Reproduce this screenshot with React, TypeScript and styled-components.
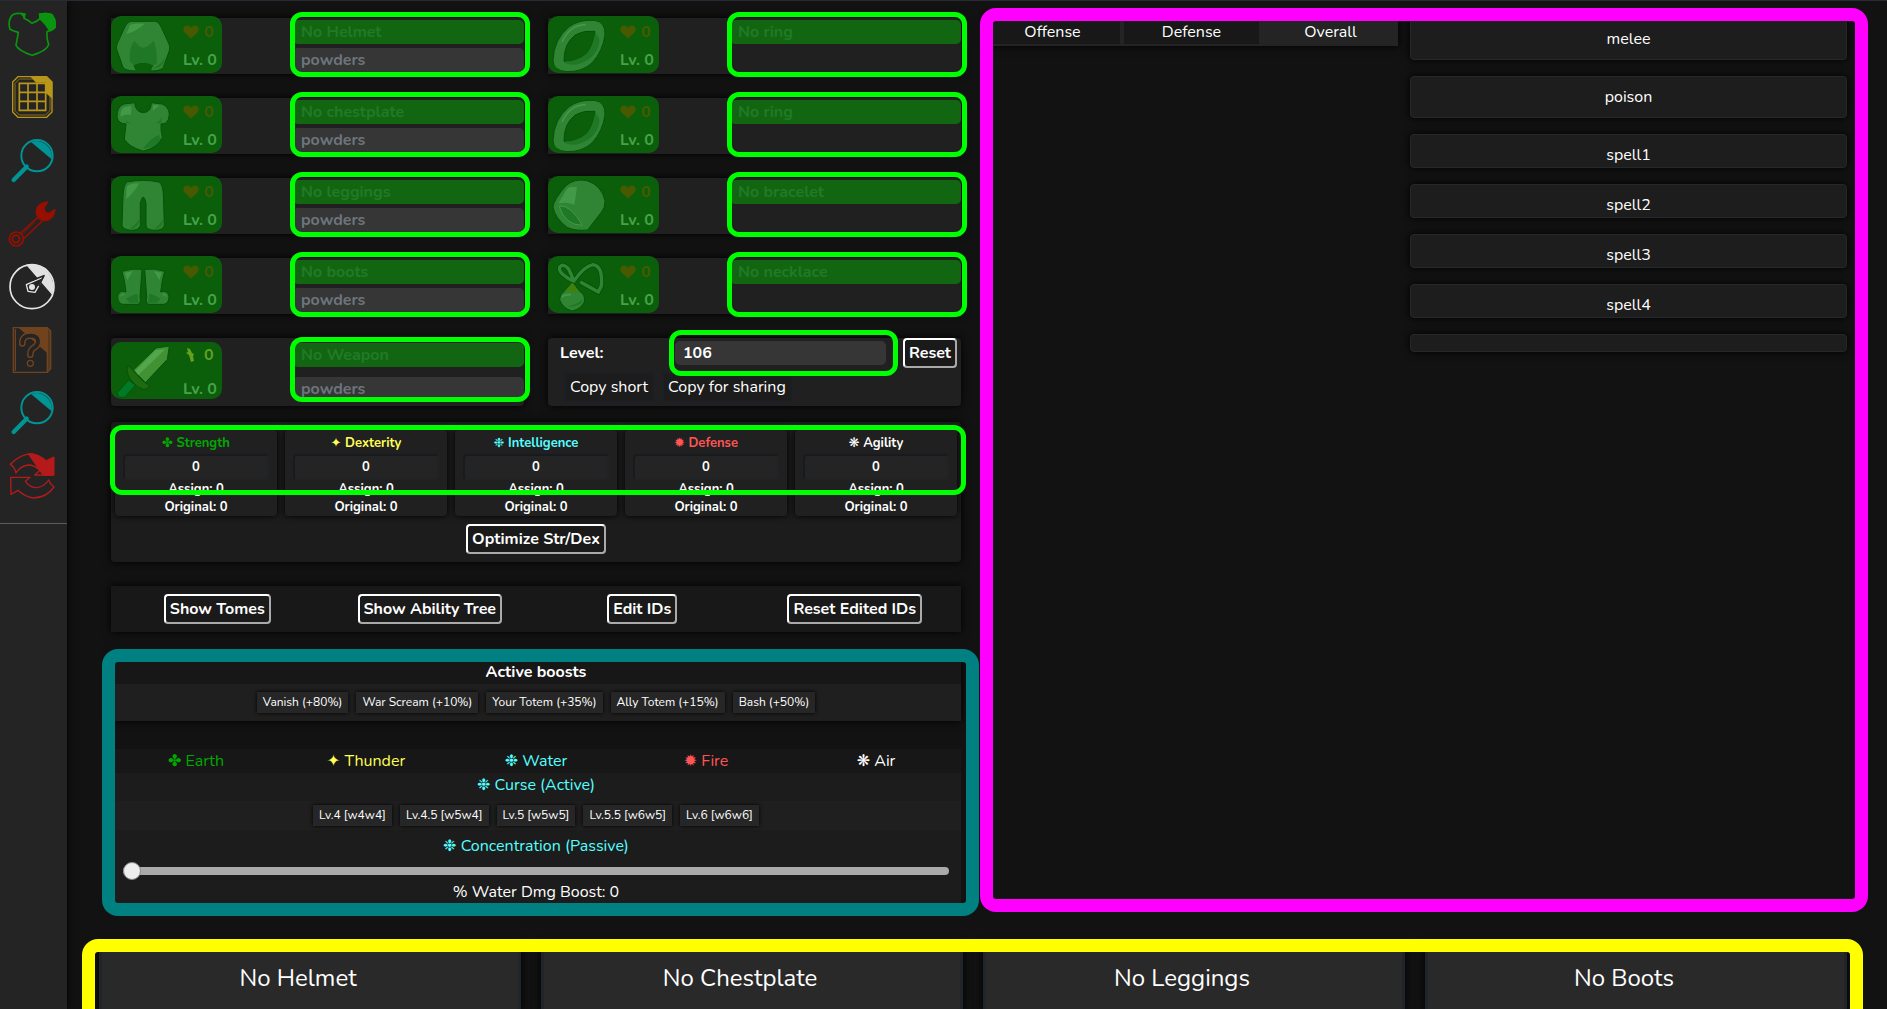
import React, { useState } from "react";
import styled, { createGlobalStyle } from "styled-components";

const GlobalStyle = createGlobalStyle`
  *, *::before, *::after { box-sizing: border-box; }
  body {
    margin: 0;
    background: #121212;
    color: #fff;
    font: 16px/24px Nunito, Lato, "DejaVu Sans", sans-serif;
  }
  button, input { font: inherit; color: inherit; margin: 0; }
  h2, p { margin: 0; font: inherit; }
`;

/* ---------- page frame ---------- */

const Shell = styled.div`
  display: flex;
  height: 100vh;
  overflow: hidden;
  border-top: 1px solid #2a2a35;
`;

const Sidebar = styled.nav`
  flex: 0 0 67px;
  display: flex;
  flex-direction: column;
  align-items: flex-start;
  gap: 15px;
  padding: 9px 8px;
  background: #242424;
  box-shadow: 0 0 8px #000;
`;

const SideLink = styled.a`
  display: block;
  width: 48px;
  height: 48px;
  svg { display: block; width: 48px; height: 48px; }
`;

const Divider = styled.hr`
  align-self: stretch;
  margin: 9px -8px 0;
  border: 0;
  border-top: 1px solid #5c5c5c;
`;

const Main = styled.main`
  flex: 1;
  min-width: 0;
  display: flex;
  flex-direction: column;
  padding: 17px 40px 0 32px;
`;

const Builder = styled.div`
  display: grid;
  grid-template-columns: minmax(0, 850fr) minmax(0, 862fr);
  gap: 24px;
  padding-left: 12px;
`;

/* Coloured outline laid over a group of controls. */
const Outline = styled.span<{ $color: string; $inset: string; $thick?: boolean }>`
  position: absolute;
  inset: ${(p) => p.$inset};
  border: ${(p) => (p.$thick ? 13 : 5)}px solid ${(p) => p.$color};
  border-radius: ${(p) => (p.$thick ? 16 : 12)}px;
  pointer-events: none;
`;

/* ---------- equipment ---------- */

const GearGrid = styled.section`
  display: grid;
  grid-template-columns: repeat(2, minmax(0, 1fr));
  gap: 24px;
  margin-bottom: 16px;
`;

const GearCard = styled.div<{ $tall?: boolean }>`
  display: flex;
  justify-content: space-between;
  align-items: flex-start;
  height: ${(p) => (p.$tall ? 68 : 56)}px;
  background: #202020;
  border-radius: ${(p) => (p.$tall ? 4 : 0)}px;
  box-shadow: 0 0 8px #000;
`;

const Tile = styled.div<{ $tall?: boolean }>`
  display: flex;
  width: 111px;
  height: 57px;
  margin-top: ${(p) => (p.$tall ? 4 : -2)}px;
  background: #0b5f0b;
  border-radius: 10px;
`;

const TileArt = styled.svg`
  width: 60px;
  height: 57px;
`;

const TileStats = styled.div<{ $tall?: boolean }>`
  display: flex;
  flex-direction: column;
  gap: ${(p) => (p.$tall ? 10 : 4)}px;
  padding: ${(p) => (p.$tall ? 1 : 4)}px 0 0 12px;
  font-weight: 700;
  color: #48a348;
`;

const Stat = styled.span<{ $color?: string }>`
  display: flex;
  align-items: center;
  gap: 5px;
  white-space: nowrap;
  color: ${(p) => p.$color ?? "inherit"};
`;

const Fields = styled.div<{ $tall?: boolean }>`
  position: relative;
  display: flex;
  flex-direction: column;
  gap: ${(p) => (p.$tall ? 10 : 4)}px;
  width: 231px;
  height: 100%;
  padding-top: ${(p) => (p.$tall ? 5 : 2)}px;
`;

const TextBox = styled.input<{ $named?: boolean }>`
  width: 100%;
  height: 24px;
  padding: 0 8px;
  border: 0;
  border-radius: 5px;
  background: ${(p) => (p.$named ? "#126612" : "#363636")};
  font-weight: 700;
  &::placeholder {
    opacity: 1;
    color: ${(p) => (p.$named ? "#217a26" : "#6c757d")};
  }
`;

/* ---------- level card ---------- */

const LevelCard = styled.div`
  height: 68px;
  padding: 0 4px 4px 12px;
  background: #202020;
  border-radius: 4px;
  box-shadow: 0 0 8px #000;
`;

const LevelRow = styled.div`
  display: flex;
  align-items: center;
  height: 30px;
  label { width: 115px; font-weight: 700; }
`;

const LevelField = styled.div`
  position: relative;
  display: flex;
  flex: 1;
  margin-right: 17px;
`;

const CopyRow = styled.div`
  display: flex;
  gap: 8px;
  margin: 4px;
`;

const CopyButton = styled.button`
  height: 30px;
  padding: 0 4px;
  border: 2px solid #1b1f23;
  border-radius: 3px;
  background: #1c1c1c;
`;

const OutsetButton = styled.button`
  height: 30px;
  padding: 0 4px;
  border: 2px solid;
  border-color: #fff #aaa #aaa #fff;
  border-radius: 4px;
  background: #1a1a1a;
  font-weight: 700;
  white-space: nowrap;
`;

/* ---------- skill points ---------- */

const SkillPanel = styled.section`
  position: relative;
  padding: 8px 4px;
  background: #1c1c1c;
  border-radius: 4px;
  box-shadow: 0 0 8px #000;
  text-align: center;
`;

const SkillGrid = styled.div`
  display: grid;
  grid-template-columns: repeat(5, minmax(0, 1fr));
  gap: 8px;
  margin-bottom: 8px;
`;

const SkillCard = styled.div`
  display: flex;
  flex-direction: column;
  padding: 4px 8px 0;
  background: #202020;
  border-radius: 4px;
  box-shadow: 0 0 6px #000;
  font-size: 13px;
  line-height: 18px;
  font-weight: 700;
`;

const SkillName = styled.label<{ $color: string }>`
  margin-bottom: 2px;
  color: ${(p) => p.$color};
`;

const SkillInput = styled.input`
  width: 100%;
  height: 26px;
  padding: 0;
  border: 2px solid;
  border-color: #171b1f #202326 #202326 #171b1f;
  border-radius: 4px;
  background: #242424;
  text-align: center;
`;

const ActionPanel = styled.section`
  display: grid;
  grid-template-columns: repeat(4, minmax(0, 1fr));
  justify-items: center;
  margin: 24px 0;
  padding: 8px 0;
  background: #181818;
  box-shadow: 0 0 8px #000;
`;

/* ---------- boosts ---------- */

const Boosts = styled.section`
  position: relative;
  text-align: center;
`;

const BoostCard = styled.div`
  margin-bottom: 28px;
  background: #1f1f1f;
  border-radius: 0 0 4px 4px;
  box-shadow: 0 0 8px #000;
`;

const BoostTitle = styled.h2`
  padding: 4px 0 0;
  background: #171717;
  font-weight: 700;
`;

const ToggleRow = styled.div<{ $pad: number }>`
  display: flex;
  justify-content: center;
  gap: 8px;
  padding: ${(p) => p.$pad}px 0;
  background: #1f1f1f;
`;

const Toggle = styled.button`
  height: 21px;
  padding: 0 6px;
  border: 0;
  background: #262626;
  box-shadow: 0 0 4px #000;
  font-size: 12px;
  line-height: 21px;
`;

const ElementTabs = styled.div`
  display: grid;
  grid-template-columns: repeat(5, minmax(0, 1fr));
  background: #171717;
`;

const ElementTab = styled.button<{ $color: string }>`
  height: 24px;
  padding: 0;
  border: 0;
  background: none;
  color: ${(p) => p.$color};
`;

const ElementBody = styled.div`
  background: #1c1c1c;
`;

const BoostLabel = styled.p`
  height: 28px;
  color: #5ff;
`;

const SliderLabel = styled.label`
  display: block;
  padding: 4px 0;
  color: #5ff;
`;

const Slider = styled.input`
  display: block;
  appearance: none;
  width: calc(100% - 24px);
  height: 18px;
  margin: 0 12px;
  background: none;
  &::-webkit-slider-runnable-track {
    height: 8px;
    border-radius: 4px;
    background: #aaa;
  }
  &::-webkit-slider-thumb {
    appearance: none;
    width: 18px;
    height: 18px;
    margin-top: -5px;
    border: 1px solid #888;
    border-radius: 50%;
    background: #eee;
  }
`;

/* ---------- results ---------- */

const Results = styled.section`
  position: relative;
  display: grid;
  grid-template-columns: minmax(0, 413fr) minmax(0, 437fr);
  gap: 12px;
  align-items: start;
`;

const ResultTabs = styled.div`
  display: grid;
  grid-template-columns: repeat(3, minmax(0, 1fr));
  gap: 4px;
  padding-bottom: 2px;
  background: #242424;
  box-shadow: 0 0 8px #000;
`;

const ResultTab = styled.button<{ $active: boolean }>`
  height: 26px;
  padding: 2px 0 0;
  border: 0;
  background: ${(p) => (p.$active ? "#242424" : "#181818")};
`;

const SpellList = styled.div`
  display: flex;
  flex-direction: column;
  gap: 16px;
`;

const SpellCard = styled.div<{ $padBottom: number }>`
  padding: 8px 8px ${(p) => p.$padBottom}px;
  border: 1px solid #24272b;
  border-radius: 4px;
  background: #1d1d1d;
  box-shadow: 0 0 8px #000;
  text-align: center;
`;

/* ---------- item summary ---------- */

const Summary = styled.section`
  position: relative;
  flex: 1;
  display: grid;
  grid-template-columns: repeat(4, minmax(0, 1fr));
  gap: 20px;
  margin-top: 40px;
`;

const SummaryCard = styled.article`
  padding: 15px 24px 15px 0;
  border: 3px solid #212529;
  border-radius: 4px;
  background: #292929;
  box-shadow: 0 0 10px #000;
  font-size: 24px;
  line-height: 32px;
  text-align: center;
`;

/* ---------- sidebar drawings ---------- */

const ShirtIcon = () => (
  <svg viewBox="24 30 144 144" fill="none" stroke="#0a940f" strokeWidth="5" strokeLinejoin="round">
    <path d="M66 41 L74 42 L72 55 Q84 60 96 70 Q112 64 120 56 L119 42 Q140 38 156 44 Q168 60 165 82 Q158 92 142 94 Q138 108 146 134 Q140 152 96 166 Q56 152 48 136 L55 97 Q40 94 30 88 Q22 62 38 44 Q52 38 66 41 Z" />
    <path fill="#0a940f" d="M119 42 Q140 38 156 44 Q168 60 165 82 L150 92 L134 70 L120 56 Z M64 41 L74 42 L73 52 Z" />
  </svg>
);

const GridIcon = () => (
  <svg viewBox="24 219 144 144" fill="none" stroke="#b8961a" strokeWidth="4">
    <path d="M54 230 H140 L156 246 V336 L140 352 H54 L38 336 V246 Z" />
    <path d="M58 237 H136 L150 250 V332 L136 345 H58 L45 332 V250 Z" strokeWidth="2" />
    <path d="M58 250 H137 V331 H58 Z M84 250 V331 M111 250 V331 M58 277 H137 M58 304 H137" strokeWidth="5" />
    <path fill="#b8961a" stroke="none" d="M90 229 H140 L157 246 V296 L138 280 V248 H108 Z" />
  </svg>
);

const SearchIcon = () => (
  <svg viewBox="24 408 144 144" fill="none" stroke="#009494" strokeWidth="6">
    <circle cx="111" cy="467" r="47" />
    <path fill="#009494" stroke="none" d="M93 426 A47 47 0 0 1 155 478 Z" />
    <path d="M80 500 L41 540" strokeWidth="13" strokeLinecap="round" />
  </svg>
);

const WrenchIcon = () => (
  <svg viewBox="24 597 144 144" fill="none" stroke="#960f00" strokeWidth="5" strokeLinejoin="round">
    <path fill="#960f00" d="M110 642 Q106 612 142 606 L131 624 L136 638 L148 641 L164 629 Q162 656 138 661 L126 660 L118 656 Z" />
    <path d="M114 652 L62 699 M130 660 L70 717" />
    <path d="M102 668 L66 704" strokeWidth="3" />
    <circle cx="49" cy="717" r="21" />
    <circle cx="48" cy="717" r="11" strokeWidth="6" />
  </svg>
);

const DialIcon = () => (
  <svg viewBox="24 36 144 144" fill="none" stroke="#e6e6e6" strokeWidth="5" strokeLinejoin="round">
    <circle cx="96" cy="110" r="66" />
    <path fill="#e0e0e0" stroke="none" d="M78 44 A68 68 0 0 1 156 134 Z" />
    <path fill="#242424" strokeWidth="4" d="M79 104 L131 81 L105 127 L84 124 Z" />
    <path stroke="#242424" strokeWidth="5" d="M98 90 L132 77 L116 108" />
    <circle cx="96" cy="111" r="9" fill="#e6e6e6" stroke="none" />
  </svg>
);

const BookIcon = () => (
  <svg viewBox="24 225 144 144" fill="none" stroke="#70431e" strokeWidth="4">
    <path d="M40 233 H142 L152 243 V356 L142 367 H40 Z M142 233 V367 M46 238 V362 M147 238 V362" />
    <path fill="#70431e" stroke="none" d="M54 232 H142 V310 Z" />
    <path stroke="#70431e" strokeWidth="20" strokeLinecap="round" d="M67 280 Q66 257 91 257 Q116 257 114 278 Q112 288 98 296 Q91 302 91 314" />
    <path stroke="#242424" strokeWidth="11" strokeLinecap="round" d="M67 280 Q66 257 91 257 Q116 257 114 278 Q112 288 98 296 Q91 302 91 314" />
    <circle cx="91" cy="340" r="9" />
  </svg>
);

const CycleIcon = () => (
  <svg viewBox="24 606 144 144" fill="none" stroke="#b51a1a" strokeWidth="4" strokeLinejoin="round">
    <path d="M31 646 Q60 616 94 614 Q118 618 138 636 L161 625 V678 H104 L120 664 Q104 648 84 648 Q60 652 48 672 Q44 654 31 646 Z" />
    <path fill="#b51a1a" d="M86 615 Q118 618 138 636 L161 625 V678 H130 Z" />
    <path d="M32 685 H90 L76 697 Q90 716 110 716 Q134 712 146 693 Q150 706 162 714 Q140 746 100 747 Q72 742 54 724 L33 736 Z" />
  </svg>
);

/* ---------- equipment drawings ---------- */

const MID = "#2f8534";
const LIGHT = "#429a47";
const DEEP = "#1f7826";
const EDGE = { stroke: "#06520a", strokeWidth: 3, strokeLinejoin: "round" as const };

const HelmetArt = () => (
  <TileArt viewBox="33 48 180 171">
    <path {...EDGE} fill={MID} d="M92 64 H168 Q176 66 182 78 L206 130 Q212 140 208 152 L190 202 Q184 213 150 213 L158 196 Q130 182 102 196 L110 213 Q76 213 69 202 L50 148 Q48 140 52 130 L76 78 Q82 66 92 64 Z" />
    <path fill={DEEP} d="M103 122 Q116 140 130 143 Q146 140 160 122 Q172 144 170 192 L156 196 Q130 182 102 196 L90 186 Q86 144 103 122 Z" />
    <path fill="#0b5f0b" d="M102 196 Q130 182 158 196 L150 213 H110 Z" />
    <path fill={LIGHT} d="M79 102 L90 76 Q100 68 134 71 Q110 94 79 102 Z" />
    <path fill={DEEP} d="M194 172 Q192 206 156 206 Q184 196 194 172 Z" />
  </TileArt>
);

const ChestArt = () => (
  <TileArt viewBox="33 288 180 171">
    <path {...EDGE} fill={MID} d="M72 312 L104 308 Q106 336 130 338 Q154 336 154 308 L186 312 Q206 320 208 342 Q208 362 196 370 L183 372 Q182 392 187 412 Q172 444 130 453 Q88 442 73 418 L78 372 Q56 372 51 352 Q50 320 72 312 Z" />
    <path fill={LIGHT} d="M62 350 Q60 322 78 320 L94 318 L93 344 Q74 342 62 350 Z M158 332 L160 316 L178 316 Z" />
    <path fill={DEEP} d="M128 446 Q150 416 178 404 L180 422 Q166 442 128 446 Z M166 370 Q180 366 184 350 V370 Z M94 370 Q80 366 78 360 V370 Z" />
  </TileArt>
);

const LegsArt = () => (
  <TileArt viewBox="33 48 180 171">
    <path {...EDGE} fill={MID} d="M82 66 Q128 56 176 66 Q188 72 190 100 L193 196 Q190 211 164 211 Q138 210 138 196 V130 Q130 92 121 130 V196 Q118 211 92 211 Q68 208 66 196 L69 110 Q70 72 82 66 Z" />
    <path fill={LIGHT} d="M78 118 L80 82 Q84 70 118 70 Q104 96 78 118 Z" />
    <path fill={DEEP} d="M118 176 Q116 208 88 206 Q106 196 118 176 Z M190 176 Q188 208 162 206 Q180 196 190 176 Z" />
  </TileArt>
);

const Boot = () => (
  <>
    <path {...EDGE} fill={MID} d="M66 334 Q96 324 126 328 L120 410 Q124 430 114 433 H68 Q54 430 53 412 Q54 395 68 394 L78 396 Q74 360 66 334 Z" />
    <path fill={LIGHT} d="M74 338 L98 334 L82 360 Z M60 410 Q64 398 76 402 Z" />
    <path fill={DEEP} d="M78 416 Q104 400 112 402 L116 428 H88 Z" />
  </>
);

const BootsArt = () => (
  <TileArt viewBox="33 288 180 171">
    <Boot />
    <g transform="translate(260 0) scale(-1 1)">
      <Boot />
    </g>
  </TileArt>
);

const RingArt = () => (
  <TileArt viewBox="27 48 180 171">
    <path {...EDGE} fill={MID} fillRule="evenodd" d="M42 182 Q44 118 90 80 Q120 58 166 61 Q200 66 198 104 Q192 152 160 188 Q130 216 84 215 Q42 212 42 182 Z M75 184 Q74 130 110 104 Q136 90 168 94 Q166 130 144 160 Q118 184 75 184 Z" />
    <path fill={DEEP} d="M168 98 Q180 112 182 122 Q172 180 110 194 Q86 196 75 186 Q118 184 144 160 Q164 132 168 98 Z" />
    <path fill="none" stroke={LIGHT} strokeWidth="5" strokeLinecap="round" d="M70 124 Q92 76 138 74" />
  </TileArt>
);

const BraceletArt = () => (
  <TileArt viewBox="27 48 180 171">
    <path {...EDGE} fill={MID} d="M42 142 Q42 122 80 78 Q106 54 144 62 Q188 76 198 122 Q200 142 186 158 L146 210 Q110 214 84 202 Q48 174 42 142 Z" />
    <path fill={LIGHT} d="M58 130 L82 90 Q92 76 114 82 L106 136 Q90 124 58 130 Z" />
    <path fill={DEEP} stroke={LIGHT} strokeWidth="3" d="M60 138 Q96 134 130 196 Q78 196 60 138 Z" />
  </TileArt>
);

const STRAP = "M104 364 Q56 340 62 322 Q72 308 88 326 Q98 344 104 364 Q136 318 162 314 Q192 318 187 378 L178 396 L124 366";

const NecklaceArt = () => (
  <TileArt viewBox="27 288 180 171">
    <path fill="none" stroke="#06520a" strokeWidth="15" d={STRAP} />
    <path fill="none" stroke={MID} strokeWidth="10" d={STRAP} />
    <path {...EDGE} fill={MID} d="M100 366 L122 394 Q140 404 136 426 Q126 446 100 453 Q72 446 62 420 Q62 402 78 392 Z" />
    <path fill="#3f800f" d="M100 368 L120 394 Q100 400 78 392 Z" />
    <path fill={DEEP} d="M132 418 Q124 444 84 440 Q112 436 132 418 Z" />
    <path fill="none" stroke={LIGHT} strokeWidth="5" d="M70 412 Q74 402 96 404" />
  </TileArt>
);

const SwordArt = () => (
  <TileArt viewBox="33 66 180 171">
    <path {...EDGE} fill="#007a26" d="M52 218 L86 180 L106 196 L74 232 H56 Z" />
    <path {...EDGE} fill="#429132" d="M100 150 L168 84 L208 78 L202 118 L136 188 Z" />
    <path fill="#52a64d" d="M106 152 L168 90 L196 88 L114 166 Z" />
    <path {...EDGE} fill="#1d6a0f" d="M82 138 Q92 138 98 150 L132 186 L148 196 Q146 208 130 208 Q112 204 96 184 Q78 164 82 138 Z" />
  </TileArt>
);

const Heart = () => (
  <svg width="16" height="14" viewBox="0 0 16 14" fill="#475a00">
    <path d="M8 13.5 L1.5 7.5 Q-1 3.5 1.5 1.5 Q5-1 8 2.5 Q11-1 14.5 1.5 Q17 3.5 14.5 7.5 Z" />
  </svg>
);

const Blade = () => (
  <svg width="16" height="16" viewBox="0 0 16 16" fill="#65a020">
    <path d="M4 1 L7 2 L9 6 L11 7 L10 9 L11 14 L8 15 L6 8 L3 6 L5 5 Z" />
  </svg>
);

/* ---------- data ---------- */

const LINKS = [
  { label: "Builder", Icon: ShirtIcon },
  { label: "Crafter", Icon: GridIcon },
  { label: "Item search", Icon: SearchIcon },
  { label: "Custom items", Icon: WrenchIcon },
  { label: "Map", Icon: DialIcon },
  { label: "Wiki", Icon: BookIcon },
  { label: "Ingredient search", Icon: SearchIcon },
  { label: "Reload", Icon: CycleIcon },
];

const GEAR = [
  { name: "No Helmet", Art: HelmetArt, powders: true },
  { name: "No ring", Art: RingArt },
  { name: "No chestplate", Art: ChestArt, powders: true },
  { name: "No ring", Art: RingArt },
  { name: "No leggings", Art: LegsArt, powders: true },
  { name: "No bracelet", Art: BraceletArt },
  { name: "No boots", Art: BootsArt, powders: true },
  { name: "No necklace", Art: NecklaceArt },
  { name: "No Weapon", Art: SwordArt, powders: true, tall: true },
];

const SKILLS = [
  { mark: "✤", name: "Strength", color: "#00a800", element: "Earth" },
  { mark: "✦", name: "Dexterity", color: "#ff5", element: "Thunder" },
  { mark: "❉", name: "Intelligence", color: "#5ff", element: "Water" },
  { mark: "✹", name: "Defense", color: "#f55", element: "Fire" },
  { mark: "❋", name: "Agility", color: "#fff", element: "Air" },
];

const ACTIONS = ["Show Tomes", "Show Ability Tree", "Edit IDs", "Reset Edited IDs"];
const BOOSTS = ["Vanish (+80%)", "War Scream (+10%)", "Your Totem (+35%)", "Ally Totem (+15%)", "Bash (+50%)"];
const CURSES = ["Lv.4 [w4w4]", "Lv.4.5 [w5w4]", "Lv.5 [w5w5]", "Lv.5.5 [w6w5]", "Lv.6 [w6w6]"];
const TABS = ["Offense", "Defense", "Overall"];
const SPELLS = [
  { name: "melee", pad: 8 },
  { name: "poison", pad: 8 },
  { name: "spell1", pad: 0 },
  { name: "spell2", pad: 0 },
  { name: "spell3", pad: 0 },
  { name: "spell4", pad: 0 },
  { name: "", pad: 8 },
];
const SUMMARY = ["No Helmet", "No Chestplate", "No Leggings", "No Boots"];

export default function App() {
  const [tab, setTab] = useState("Overall");
  const [water, setWater] = useState(0);

  return (
    <>
      <GlobalStyle />
      <Shell>
        <Sidebar>
          {LINKS.map(({ label, Icon }) => (
            <SideLink key={label} href="#" aria-label={label}>
              <Icon />
            </SideLink>
          ))}
          <Divider />
        </Sidebar>

        <Main>
          <Builder>
            <div>
              <GearGrid>
                {GEAR.map(({ name, Art, powders, tall }, i) => (
                  <GearCard key={i} $tall={tall}>
                    <Tile $tall={tall}>
                      <Art />
                      <TileStats $tall={tall}>
                        <Stat $color={tall ? "#65a020" : "#475a00"}>
                          {tall ? <Blade /> : <Heart />} 0
                        </Stat>
                        <Stat>Lv. 0</Stat>
                      </TileStats>
                    </Tile>
                    <Fields $tall={tall}>
                      <TextBox $named placeholder={name} aria-label={name} />
                      {powders && <TextBox placeholder="powders" aria-label={`${name} powders`} />}
                      <Outline $color="#0f0" $inset={tall ? "-1px -6px 4px -3px" : "-6px -6px -3px -3px"} />
                    </Fields>
                  </GearCard>
                ))}
                <LevelCard>
                  <LevelRow>
                    <label htmlFor="level">Level:</label>
                    <LevelField>
                      <TextBox id="level" defaultValue="106" />
                      <Outline $color="#0f0" $inset="-11px -12px -11px -6px" />
                    </LevelField>
                    <OutsetButton>Reset</OutsetButton>
                  </LevelRow>
                  <CopyRow>
                    <CopyButton>Copy short</CopyButton>
                    <CopyButton>Copy for sharing</CopyButton>
                  </CopyRow>
                </LevelCard>
              </GearGrid>

              <SkillPanel>
                <SkillGrid>
                  {SKILLS.map((s) => (
                    <SkillCard key={s.name}>
                      <SkillName $color={s.color} htmlFor={s.name}>
                        {s.mark} {s.name}
                      </SkillName>
                      <SkillInput id={s.name} defaultValue="0" />
                      <span>Assign: 0</span>
                      <span>Original: 0</span>
                    </SkillCard>
                  ))}
                </SkillGrid>
                <OutsetButton>Optimize Str/Dex</OutsetButton>
                <Outline $color="#0f0" $inset="3px -5px 67px -1px" />
              </SkillPanel>

              <ActionPanel>
                {ACTIONS.map((a) => (
                  <OutsetButton key={a}>{a}</OutsetButton>
                ))}
              </ActionPanel>

              <Boosts>
                <BoostCard>
                  <BoostTitle>Active boosts</BoostTitle>
                  <ToggleRow $pad={8}>
                    {BOOSTS.map((b) => (
                      <Toggle key={b}>{b}</Toggle>
                    ))}
                  </ToggleRow>
                </BoostCard>
                <ElementTabs>
                  {SKILLS.map((s) => (
                    <ElementTab key={s.element} $color={s.color}>
                      {s.mark} {s.element}
                    </ElementTab>
                  ))}
                </ElementTabs>
                <ElementBody>
                  <BoostLabel>❉ Curse (Active)</BoostLabel>
                  <ToggleRow $pad={4}>
                    {CURSES.map((c) => (
                      <Toggle key={c}>{c}</Toggle>
                    ))}
                  </ToggleRow>
                  <SliderLabel htmlFor="water">❉ Concentration (Passive)</SliderLabel>
                  <Slider
                    id="water"
                    type="range"
                    min={0}
                    max={100}
                    value={water}
                    onChange={(e) => setWater(Number(e.target.value))}
                  />
                  <p>% Water Dmg Boost: {water}</p>
                </ElementBody>
                <Outline $thick $color="#008080" $inset="-7px -18px -12px -9px" />
              </Boosts>
            </div>

            <Results>
              <ResultTabs>
                {TABS.map((t) => (
                  <ResultTab key={t} $active={t === tab} onClick={() => setTab(t)}>
                    {t}
                  </ResultTab>
                ))}
              </ResultTabs>
              <SpellList>
                {SPELLS.map((s) => (
                  <SpellCard key={s.name} $padBottom={s.pad}>
                    {s.name}
                  </SpellCard>
                ))}
              </SpellList>
              <Outline $thick $color="#f0f" $inset="-10px -21px -8px -5px" />
            </Results>
          </Builder>

          <Summary>
            {SUMMARY.map((s) => (
              <SummaryCard key={s}>
                <h2>{s}</h2>
              </SummaryCard>
            ))}
            <Outline $thick $color="#ff0" $inset="-5px -16px -20px -17px" />
          </Summary>
        </Main>
      </Shell>
    </>
  );
}
